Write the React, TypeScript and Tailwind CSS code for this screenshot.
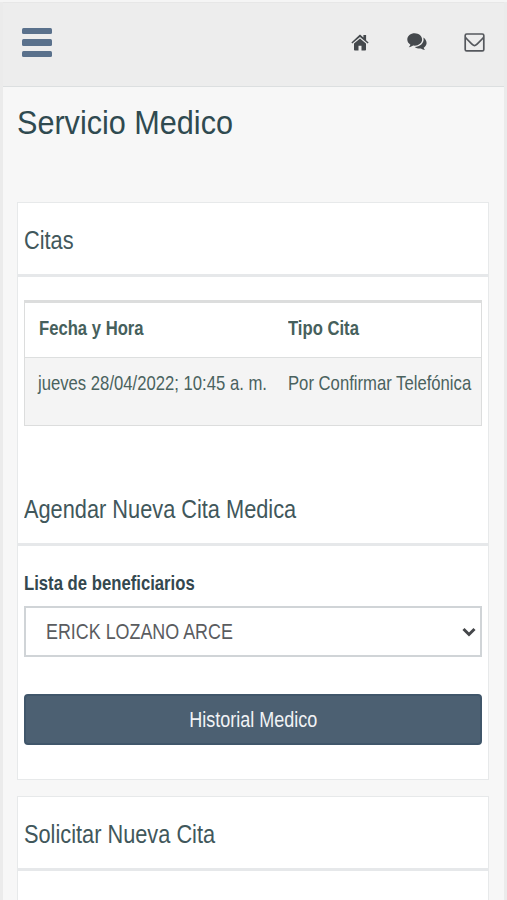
import React from "react";

function SectionTitle({ children }: { children: React.ReactNode }) {
  return (
    <div className="flex h-[74px] items-center border-b-[3px] border-[#e6e8ea] pt-[3px] pl-1.5">
      <h2 className="origin-left scale-x-[0.837] text-[26px] leading-[30px] whitespace-nowrap text-[#41575b]">
        {children}
      </h2>
    </div>
  );
}

function CellText({ children, bold = false }: { children: React.ReactNode; bold?: boolean }) {
  return (
    <span
      className={
        bold
          ? "block w-max origin-left scale-x-[0.793] text-[21px] leading-6 font-bold whitespace-nowrap text-[#46605c]"
          : "block w-0 origin-left scale-x-[0.794] text-[21px] leading-6 whitespace-nowrap text-[#4a625e]"
      }
    >
      {children}
    </span>
  );
}

function HomeIcon() {
  return (
    <svg viewBox="0 0 18 17" className="h-[17px] w-[18px]" fill="#45494d">
      <path d="M9 4.600 3 9.500v6.200c0 .5.3.8.8.8h3.700v-4.700h3v4.700h3.700c.5 0 .8-.3.8-.8V9.500Z" />
      <path d="M.4 8.600 8.100 1.200c.5-.5 1.300-.5 1.800 0L12.400 3.600V1h2.700v5.200l2.500 2.400-.9 1L9 3.100 1.300 9.600Z" />
    </svg>
  );
}

function CommentsIcon() {
  return (
    <svg viewBox="0 0 20 18" className="ml-[38px] h-[18px] w-5" fill="#45494d">
      <path d="M7.700.3C3.600.3.300 3 .300 6.600c0 2.100 1.200 3.900 3.100 5.100-.3 1-.8 1.700-1.600 2.500 1.700-.1 3.200-.7 4.400-1.600.5.100 1 .1 1.500.1 4.100 0 7.400-2.600 7.400-6.100S11.800.3 7.700.3Z" />
      <path d="M16.300 4.500c.2.700.3 1.400.3 2.100 0 4.100-3.900 7.300-8.800 7.400 1.300 1 3 1.500 4.900 1.500.4 0 .8 0 1.200-.1 1.200.9 2.600 1.500 4.200 1.700-.8-.8-1.200-1.500-1.400-2.400 1.800-1.100 2.900-2.700 2.900-4.600 0-2.300-1.300-4.400-3.300-5.600Z" />
    </svg>
  );
}

function EnvelopeIcon() {
  return (
    <svg
      viewBox="0 0 21 19"
      className="ml-[37px] h-[19px] w-[21px]"
      fill="none"
      stroke="#55585d"
      strokeWidth="1.700"
      strokeLinejoin="round"
    >
      <rect x="1.200" y="1" width="18.600" height="16.900" rx="1.500" />
      <path d="M1.500 4.500c2.300 2.700 4.700 4.800 7.100 7.200 1.200 1.200 2.600 1.200 3.800 0 2.400-2.400 4.800-4.500 7.100-7.200" />
    </svg>
  );
}

export default function App() {
  return (
    <div
      className="h-[900px] w-full overflow-hidden bg-[#f5f5f5] pt-0.5"
      style={{ fontFamily: '"Liberation Sans", Arial, sans-serif' }}
    >
      <div className="h-full border-x-[3px] border-[#ebebeb] bg-[#f7f7f7]">
        <header className="flex h-[85px] items-center justify-between border-t border-b border-t-[#e7e7e7] border-b-[#dcdfe0] bg-[#ededed] pr-[19px] pb-[5px] pl-[19px]">
          <button className="mt-px flex flex-col gap-[5px]" aria-label="Menu">
            <span className="h-[6.500px] w-[30px] rounded-[1.500px] bg-[#5a718c]" />
            <span className="h-[6.500px] w-[30px] rounded-[1.500px] bg-[#5a718c]" />
            <span className="h-[6.500px] w-[30px] rounded-[1.500px] bg-[#5a718c]" />
          </button>
          <nav className="flex items-center">
            <HomeIcon />
            <CommentsIcon />
            <EnvelopeIcon />
          </nav>
        </header>

        <main className="pr-[15px] pl-3.5">
          <div className="flex h-[115px] items-start pt-[15px]">
            <h1 className="origin-left scale-x-[0.9] text-[34px] leading-10 whitespace-nowrap text-[#2f4a50]">
              Servicio Medico
            </h1>
          </div>

          <section className="h-[578px] border border-[#e7e9ea] bg-white">
            <SectionTitle>Citas</SectionTitle>
            <div className="mx-1.5 mt-[23px] h-[126px] border border-t-[3px] border-[#dcdddd]">
              <div className="grid h-[55px] grid-cols-[249px_1fr] items-center border-b border-[#dddfdf] pb-1 pl-3.5">
                <CellText bold>Fecha y Hora</CellText>
                <CellText bold>Tipo Cita</CellText>
              </div>
              <div className="grid h-[67px] grid-cols-[250px_1fr] items-start bg-[#f4f4f4] pt-[13px] pl-[13px]">
                <CellText>jueves 28/04/2022; 10:45 a. m.</CellText>
                <CellText>Por Confirmar Telefónica</CellText>
              </div>
            </div>
            <div className="mt-[46px]">
              <SectionTitle>Agendar Nueva Cita Medica</SectionTitle>
            </div>
            <div className="px-1.5 pt-[25px]">
              <label className="block w-max origin-left scale-x-[0.795] text-[21px] leading-6 font-bold whitespace-nowrap text-[#34484f]">
                Lista de beneficiarios
              </label>
              <div className="mt-[11px] flex h-[51px] items-center justify-between border-2 border-[#d0d4d7] pr-1 pl-5">
                <span className="origin-left scale-x-[0.813] text-[22px] leading-6 whitespace-nowrap text-[#5a5c5f]">
                  ERICK LOZANO ARCE
                </span>
                <svg viewBox="0 0 14 10" className="h-2.5 w-3.5" fill="none" stroke="#45474a" strokeWidth="3">
                  <path d="m1.500 2 5.500 5.500 5.500-5.500" />
                </svg>
              </div>
              <button className="mt-[37px] flex h-[51px] w-full items-center justify-center rounded border-2 border-[#40566a] bg-[#4c6072]">
                <span className="inline-block scale-x-[0.818] text-[22px] leading-6 whitespace-nowrap text-[#f1f3f5]">
                  Historial Medico
                </span>
              </button>
            </div>
          </section>

          <section className="mt-4 h-[120px] border border-[#e7e9ea] bg-white">
            <SectionTitle>Solicitar Nueva Cita</SectionTitle>
          </section>
        </main>
      </div>
    </div>
  );
}
